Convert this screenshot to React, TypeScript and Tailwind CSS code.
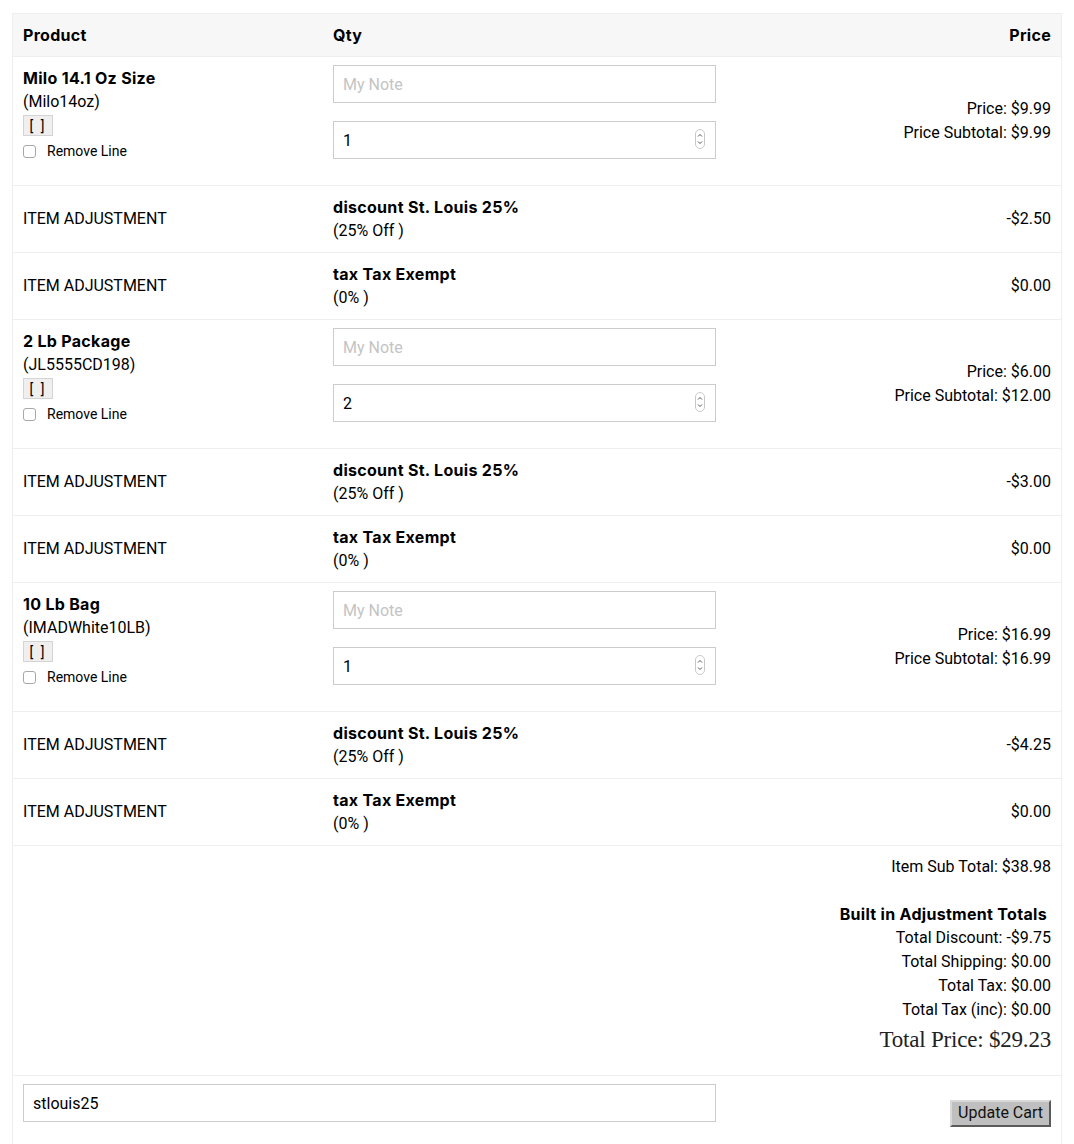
import React from "react";

type Product = {
  name: string;
  code: string;
  qty: string;
  price: string;
  subtotal: string;
  discount: string;
};

const products: Product[] = [
  { name: "Milo 14.1 Oz Size", code: "(Milo14oz)", qty: "1", price: "$9.99", subtotal: "$9.99", discount: "-$2.50" },
  { name: "2 Lb Package", code: "(JL5555CD198)", qty: "2", price: "$6.00", subtotal: "$12.00", discount: "-$3.00" },
  { name: "10 Lb Bag", code: "(IMADWhite10LB)", qty: "1", price: "$16.99", subtotal: "$16.99", discount: "-$4.25" },
];

const cols = "grid grid-cols-[310px_403px_1fr]";
const boldFont = { fontFamily: "Inter, Roboto, sans-serif" };

function Spinner() {
  return (
    <svg
      className="absolute right-[11px] top-[8px]"
      width="10"
      height="20"
      viewBox="0 0 10 20"
    >
      <rect x="0.5" y="0.5" width="9" height="19" rx="4.5" fill="#fff" stroke="#c8c8c8" />
      <path d="M3 7.5 L5 5.5 L7 7.5" fill="none" stroke="#555" strokeWidth="1" />
      <path d="M3 12.5 L5 14.5 L7 12.5" fill="none" stroke="#555" strokeWidth="1" />
    </svg>
  );
}

function ProductRow({ p }: { p: Product }) {
  return (
    <div className={`${cols} h-[129px] border-t border-[#eee]`}>
      <div className="px-[10px] pt-[9px]">
        <div className="font-bold leading-6 tracking-[0.3px]" style={boldFont}>{p.name}</div>
        <div className="leading-6">{p.code}</div>
        <div className="mt-[1px] flex h-[21px] w-[30px] items-center justify-center whitespace-pre border border-[#d4d4d4] bg-[#efefef] text-[14px] leading-none tracking-[2px]">
          {"[ ]"}
        </div>
        <div className="mt-[5px] flex items-center text-[14px] leading-5">
          <span className="inline-block h-[13px] w-[13px] rounded-[3px] border border-[#a8a8a8] bg-white" />
          <span className="ml-[11px]">Remove Line</span>
        </div>
      </div>
      <div className="px-[10px] pt-[8px]">
        <input
          className="block h-[38px] w-[383px] border border-[#ccc] bg-white px-[9px] text-[16px] outline-none placeholder:text-[#c4c4c4]"
          placeholder="My Note"
          readOnly
        />
        <div className="relative mt-[18px] w-[383px]">
          <input
            className="block h-[38px] w-[383px] border border-[#ccc] bg-white px-[9px] text-[16px] outline-none"
            value={p.qty}
            readOnly
          />
          <Spinner />
        </div>
      </div>
      <div className="flex flex-col items-end justify-center px-[10px] leading-6">
        <div>Price: {p.price}</div>
        <div>Price Subtotal: {p.subtotal}</div>
      </div>
    </div>
  );
}

function AdjRow({ title, sub, amount }: { title: string; sub: string; amount: string }) {
  return (
    <div className={`${cols} h-[67px] border-t border-[#eee]`}>
      <div className="flex items-center px-[10px] leading-6">ITEM ADJUSTMENT</div>
      <div className="flex flex-col justify-center px-[10px] leading-6">
        <div className="font-bold tracking-[0.3px]" style={boldFont}>{title}</div>
        <div>{sub}</div>
      </div>
      <div className="flex items-center justify-end px-[10px] leading-6">{amount}</div>
    </div>
  );
}

export default function App() {
  return (
    <div className="min-h-screen bg-white pt-[13px] text-[16px] text-black" style={{ fontFamily: "Roboto, 'Noto Sans', sans-serif" }}>
      <div className="mx-[12px] border border-[#eee]">
        <div className={`${cols} h-[42px] items-center bg-[#f7f7f7] font-bold tracking-[0.3px]`} style={boldFont}>
          <div className="px-[10px]">Product</div>
          <div className="px-[10px]">Qty</div>
          <div className="px-[10px] text-right">Price</div>
        </div>
        {products.map((p) => (
          <React.Fragment key={p.name}>
            <ProductRow p={p} />
            <AdjRow title="discount St. Louis 25%" sub="(25% Off )" amount={p.discount} />
            <AdjRow title="tax Tax Exempt" sub="(0% )" amount="$0.00" />
          </React.Fragment>
        ))}
        <div className={`${cols} h-[230px] border-t border-[#eee]`}>
          <div />
          <div />
          <div className="px-[10px] pt-[9px] text-right leading-6">
            <div>Item Sub Total: $38.98</div>
            <div className="mt-[23px] font-bold tracking-[0.3px]" style={boldFont}>Built in Adjustment Totals{"\u00a0"}</div>
            <div>Total Discount: -$9.75</div>
            <div>Total Shipping: $0.00</div>
            <div>Total Tax: $0.00</div>
            <div>Total Tax (inc): $0.00</div>
            <div
              className="text-[23px] leading-[36px] tracking-[-0.2px] text-[#222]"
              style={{ fontFamily: "'Liberation Serif', 'DejaVu Serif', serif" }}
            >
              Total Price: $29.23
            </div>
          </div>
        </div>
        <div className="grid h-[75px] grid-cols-[713px_1fr] border-t border-[#eee]">
          <div className="px-[10px] pt-[8px]">
            <input
              className="block h-[38px] w-[693px] border border-[#ccc] bg-white px-[9px] text-[16px] outline-none"
              value="stlouis25"
              readOnly
            />
          </div>
          <div className="flex items-center justify-end px-[10px]">
            <button className="h-[27px] border-2 border-t-[#d8d8d8] border-l-[#d8d8d8] border-r-[#5a5a5a] border-b-[#5a5a5a] bg-[#bfbfbf] px-[6px] text-[16px] leading-none text-[#111]">
              Update Cart
            </button>
          </div>
        </div>
      </div>
    </div>
  );
}
